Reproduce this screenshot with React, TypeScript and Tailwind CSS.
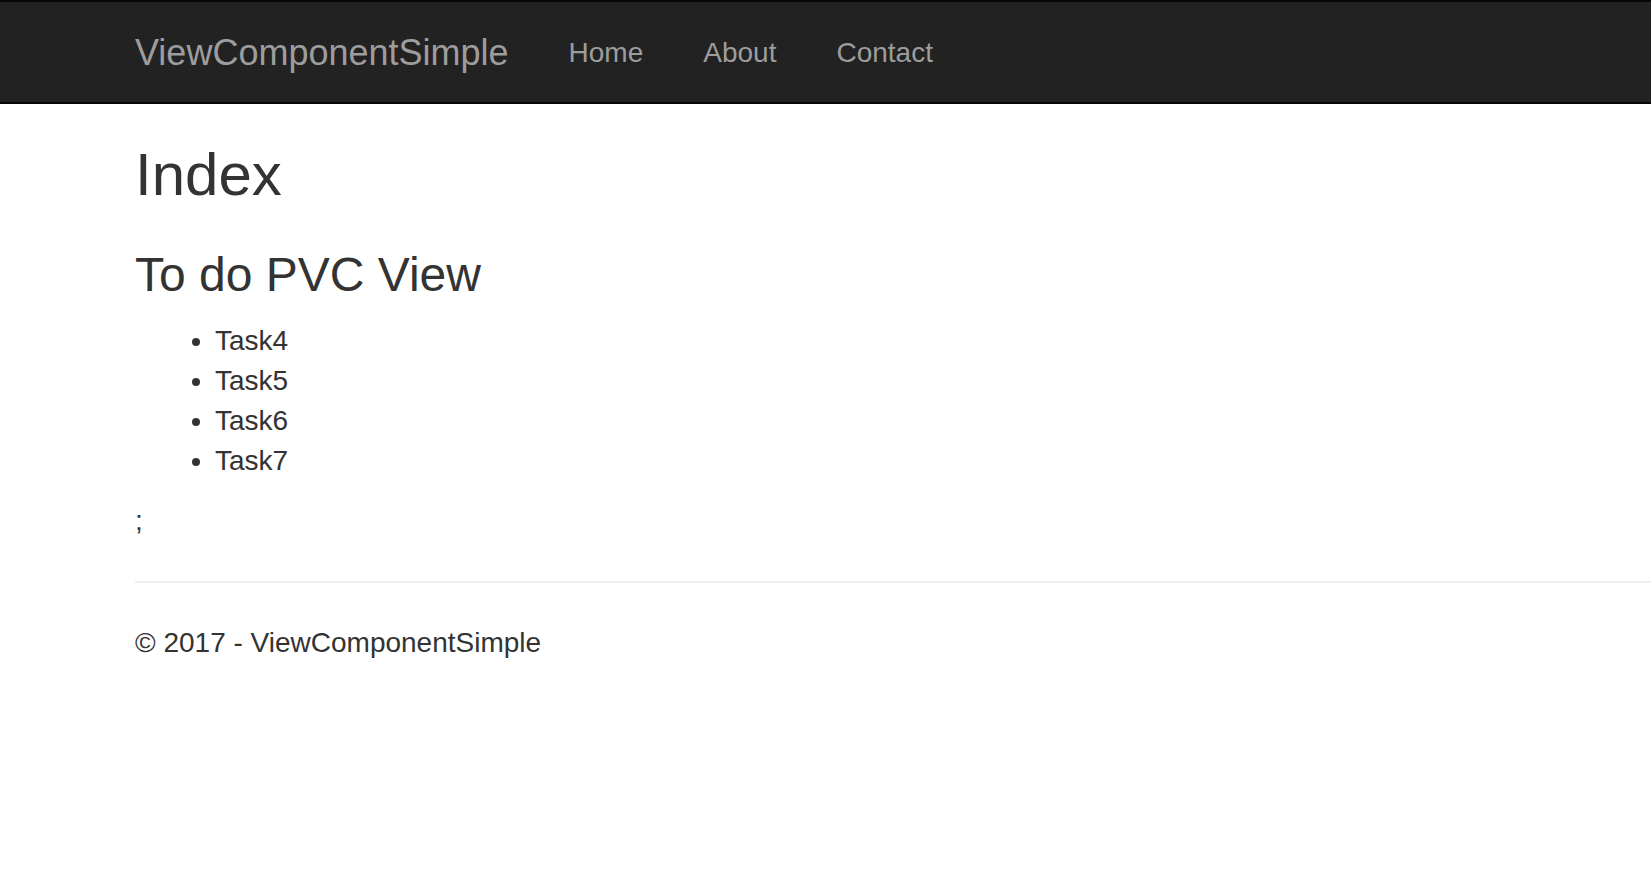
import React from "react";

const tasks = ["Task4", "Task5", "Task6", "Task7"];
const links = ["Home", "About", "Contact"];

export default function App() {
    return (
        <div className="min-h-[894px] bg-white text-[#333] font-['Liberation_Sans',Arial,sans-serif]">
            {/* Navbar */}
            <nav className="h-[104px] bg-[#222] border-y-2 border-[#080808]">
                <div className="flex items-start pl-[105px]">
                    <a href="#" className="px-[30px] pt-[31px] pb-[29px] text-[36px] leading-[40px] text-[#9d9d9d]">
                        ViewComponentSimple
                    </a>
                    <ul className="flex">
                        {links.map((l) => (
                            <li key={l}>
                                <a href="#" className="block px-[30px] pt-[31px] pb-[29px] text-[28px] leading-[40px] text-[#9d9d9d]">
                                    {l}
                                </a>
                            </li>
                        ))}
                    </ul>
                </div>
            </nav>

            {/* Body content */}
            <div className="pl-[135px] pt-[38px] text-[28px] leading-[40px]">
                <h2 className="text-[60px] leading-[66px] font-normal">Index</h2>
                <h3 className="mt-[40px] text-[48px] leading-[53px] font-normal">To do PVC View</h3>
                <ul className="mt-[20px] mb-[20px] pl-[80px] list-disc">
                    {tasks.map((t) => (
                        <li key={t}>{t}</li>
                    ))}
                </ul>
                <div>;</div>
                <hr className="mt-[40px] mb-[40px] border-t-2 border-[#eee]" />
                <footer>
                    <p>© 2017 - ViewComponentSimple</p>
                </footer>
            </div>
        </div>
    );
}
